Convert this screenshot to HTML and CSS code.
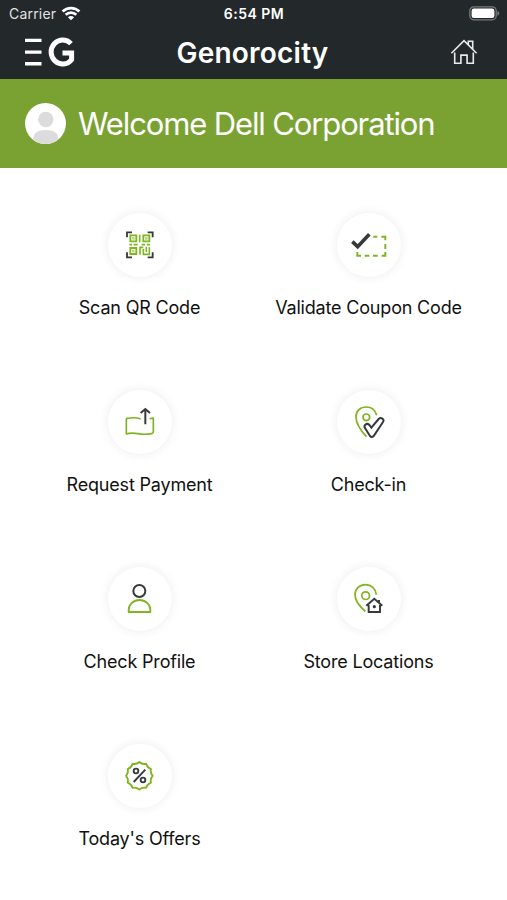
FILE: index.html
```html
<!DOCTYPE html>
<html lang="en">
<head>
<meta charset="utf-8">
<title>Genorocity</title>
<link rel="stylesheet" href="styles.css">
</head>
<body>
<header class="top">
  <div class="status">
    <div class="carrier"><span>Carrier</span>
      <svg width="20" height="15" viewBox="0 0 20 15" fill="none" stroke="#fff" stroke-width="2.7"><path d="M1.6 5.5C6.3.9 13.7.9 18.4 5.5"/><path d="M4.7 8.7c3-2.9 7.6-2.9 10.6 0"/><path d="M6.9 11.2Q10 8.7 13.1 11.2L10 14.3z" fill="#fff" stroke="none"/></svg>
    </div>
    <span class="clock">6:54 PM</span>
    <svg class="battery" width="31" height="15" viewBox="0 0 31 15"><rect x=".8" y=".8" width="26.4" height="13" rx="4" fill="none" stroke="#77797b" stroke-width="1.3"/><rect x="2.6" y="2.6" width="22.8" height="9.4" rx="2.3" fill="#fff"/><path d="M28.4 5q1.9.5 1.9 2.4t-1.9 2.4z" fill="#77797b"/></svg>
  </div>
  <nav class="bar">
    <div class="brand">
      <svg width="17" height="28" viewBox="0 0 17 28" stroke="#fff" stroke-width="3.4"><path d="M0 2.4h16.5M0 14.1h16.5M0 25.8h16.5"/></svg>
      <svg width="27" height="30" viewBox="0 0 27 30" fill="none" stroke="#fff" stroke-width="5"><path d="M23 6.6A11.6 12 0 1 0 23.6 22.7V15.9H14.5"/></svg>
    </div>
    <h1>Genorocity</h1>
    <svg class="home" width="28" height="26" viewBox="0 0 28 26" fill="none" stroke="#e9eaea" stroke-width="1.6"><path d="M1.4 14.2 14 1.7 26.6 14.2M4.7 13.5V24.2H10.9V16.1H17.1V24.2H23.3V13.5M18.3 5.7V2.2H22.7V10"/></svg>
  </nav>
</header>
<section class="welcome">
  <svg width="41" height="41" viewBox="0 0 41 41"><defs><clipPath id="face"><circle cx="20.5" cy="20.5" r="20.5"/></clipPath></defs><g clip-path="url(#face)"><path fill="#fff" d="M0 0h41v41H0z"/><circle cx="20.8" cy="16.5" r="7.7" fill="#dcdcdc"/><path d="M8.4 41v-5q0-9 12.4-9t12.4 9v5z" fill="#dcdcdc"/></g></svg>
  <h2>Welcome Dell Corporation</h2>
</section>
<main class="menu">
  <a class="item"><span class="disc"><svg viewBox="81 81 108 108"><g fill="none" stroke="#7fb522" stroke-width="5.5"><path d="M106 106h18v18h-18zM145 106h18v18h-18zM106 144h18v18h-18z"/><path d="M134 104v23M103 134h8M116 134h12M140 134h10M156 134h9M135 164v-22h10M145 147v16h18v-21M154 140v16" stroke-width="4.8"/></g><path d="M111 111h8v8h-8zM150 111h8v8h-8zM111 149h8v8h-8z" fill="#b9da82"/><path d="M96 112V97h15M158 97h15v15M96 157v15h15M158 172h15v-15" fill="none" stroke="#363a3a" stroke-width="5.5"/></svg></span><span class="label">Scan QR Code</span></a>
  <a class="item"><span class="disc"><svg viewBox="83 81 108 108"><path d="M150 110h12M174 110h12v11M186 132v15M186 156v11h-11M163 167h-14M138 167h-14M113 167h-11v-11" fill="none" stroke="#7fb522" stroke-width="5.8"/><path d="M87 125l16 15 35-37" fill="none" stroke="#363a3a" stroke-width="11"/></svg></span><span class="label">Validate Coupon Code</span></a>
  <a class="item"><span class="disc"><svg viewBox="81 81 108 108"><path d="M135 125C124 121 110 122 96 124q-2 1-2 4v43q14-5 35-1t43-1q3-1 3-4v-42l-9 2" fill="none" stroke="#7fb522" stroke-width="5" stroke-linejoin="round" stroke-linecap="round"/><path d="M151 142V98M137 108l14-12 14 12" fill="none" stroke="#363a3a" stroke-width="6"/></svg></span><span class="label">Request Payment</span></a>
  <a class="item"><span class="disc"><svg viewBox="83 81 108 108"><g fill="none" stroke="#7fb522" stroke-width="5.2"><path d="M129 179Q98 145 98 120C98 101 111 90 129 90c15 0 27 10 31 25"/><circle cx="129" cy="121" r="10"/></g><path d="M126 143q6-5 12 1l6 8 22-26q5-5 11-1t2 10l-28 42q-6 6-11 0l-15-24q-4-6 1-10z" fill="#fff" stroke="#363a3a" stroke-width="6"/></svg></span><span class="label">Check-in</span></a>
  <a class="item"><span class="disc"><svg viewBox="81 81 108 108" fill="none" stroke-width="6"><circle cx="133" cy="111" r="18" stroke="#363a3a"/><path d="M101 174v-7a32.5 29 0 0 1 65 0v7z" stroke="#7fb522" stroke-width="5.5" stroke-linejoin="round"/></svg></span><span class="label">Check Profile</span></a>
  <a class="item"><span class="disc"><svg viewBox="83 81 108 108"><g fill="none" stroke="#7fb522" stroke-width="5.2"><path d="M126 172Q95 145 95 122C95 104 109 92 127 92c17 0 30 12 32 30"/><circle cx="127" cy="125" r="11.5"/></g><path d="M136 153v21h34v-21M129 155l24-21 24 21M167 147v-9" fill="none" stroke="#363a3a" stroke-width="5.8"/><circle cx="153" cy="158" r="4.8" fill="#363a3a"/></svg></span><span class="label">Store Locations</span></a>
  <a class="item"><span class="disc"><svg viewBox="81 81 108 108" fill="none"><path d="M133 93Q141 101 153.500 98.500Q156.400 110.300 168 114Q164.800 125.700 173 134.500Q164.800 143.300 168 155Q156.400 158.700 153.500 170.500Q141 168 133 176Q125 168 112.500 170.500Q109.600 158.700 98 155Q101.200 143.300 93 134.500Q101.200 125.700 98 114Q109.600 110.300 112.500 98.500Q125 101 133 93z" stroke="#7fb522" stroke-width="5.5" stroke-linejoin="round"/><g stroke="#363a3a" stroke-width="5.6"><path d="M116 153l35-37"/><circle cx="123" cy="120" r="7"/><circle cx="144" cy="147" r="7"/></g></svg></span><span class="label">Today's Offers</span></a>
</main>
</body>
</html>
```
FILE: styles.css
```css
* { box-sizing: border-box; }
body { margin: 0; height: 900px; background: #fff; color: #111; font-family: Inter, "Liberation Sans", sans-serif; overflow: hidden; }
svg { display: block; flex: none; }
h1, h2 { margin: 0; white-space: nowrap; }
.top { height: 79px; background: #23282b; color: #fff; }
.status { height: 27px; padding: 0 8px 0 9px; display: grid; grid-template-columns: 1fr auto 1fr; align-items: center; }
.carrier { display: flex; align-items: center; gap: 5px; font-size: 14px; letter-spacing: .2px; color: #e1e2e2; }
.clock { font-size: 14px; font-weight: 600; letter-spacing: .5px; }
.battery { justify-self: end; margin-right: -1px; }
.bar { height: 50px; padding: 0 29px 0 25px; display: grid; grid-template-columns: 1fr auto 1fr; align-items: center; }
.brand { display: flex; align-items: center; gap: 6px; }
.home { justify-self: end; }
h1 { font-size: 28px; font-weight: 600; line-height: 34px; letter-spacing: .22px; padding: 1px 0 0 2px; }
.welcome { height: 89px; padding-left: 25px; display: flex; align-items: center; gap: 12px; background: #7aa232; color: #fff; }
h2 { font-size: 31px; font-weight: 400; line-height: 40px; letter-spacing: -1.13px; }
.menu { padding: 45px 25px 0; display: grid; grid-template-columns: 229px 229px; grid-auto-rows: 177px; }
.item { display: flex; flex-direction: column; align-items: center; }
.disc { width: 64px; height: 64px; border-radius: 50%; background: #fff; box-shadow: 0 0 9px 2px rgba(0, 0, 0, .055); display: grid; place-items: center; }
.disc svg { width: 36px; height: 36px; }
.label { margin-top: 19px; font-size: 18px; line-height: 24px; letter-spacing: -.18px; white-space: nowrap; }
```
